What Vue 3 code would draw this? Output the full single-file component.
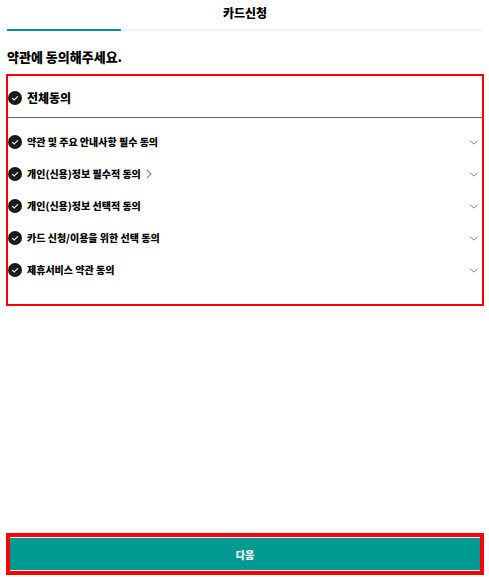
<template>
  <div class="page">
    <header class="top">
      <h1 class="top-title">카드신청</h1>
      <div class="progress">
        <div class="progress-bar" :style="{ width: progress + 'px' }"></div>
      </div>
    </header>

    <h2 class="heading">약관에 동의해주세요.</h2>

    <section class="terms">
      <div class="all-row">
        <svg class="check" viewBox="0 0 14 14">
          <circle cx="7" cy="7" r="7" fill="#1a1a1a" />
          <path d="M4.2 7.1l2 1.9 3.6-3.7" fill="none" stroke="#fff" stroke-width="1.2" />
        </svg>
        <span class="all-label">전체동의</span>
      </div>
      <ul class="term-list">
        <li v-for="term in terms" :key="term.label" class="term-row">
          <svg class="check" viewBox="0 0 14 14">
            <circle cx="7" cy="7" r="7" fill="#1a1a1a" />
            <path d="M4.2 7.1l2 1.9 3.6-3.7" fill="none" stroke="#fff" stroke-width="1.2" />
          </svg>
          <span class="term-label">{{ term.label }}</span>
          <svg v-if="term.link" class="link-arrow" viewBox="0 0 6 10">
            <path d="M1 1l4 4-4 4" fill="none" stroke="#888" stroke-width="1.1" />
          </svg>
          <svg class="chevron" viewBox="0 0 8 5">
            <path d="M.5.7L4 4.2 7.5.7" fill="none" stroke="#777" stroke-width="1" />
          </svg>
        </li>
      </ul>
    </section>

    <div class="next-wrap">
      <button class="next-btn" type="button">다음</button>
    </div>
  </div>
</template>

<script setup>
const progress = 114

const terms = [
  { label: '약관 및 주요 안내사항 필수 동의' },
  { label: '개인(신용)정보 필수적 동의', link: true },
  { label: '개인(신용)정보 선택적 동의' },
  { label: '카드 신청/이용을 위한 선택 동의' },
  { label: '제휴서비스 약관 동의' }
]
</script>

<style>
html,
body {
  margin: 0;
  background: #fff;
}
</style>

<style scoped>
.page {
  height: 577px;
  box-sizing: border-box;
  padding: 0 7px 2px;
  display: flex;
  flex-direction: column;
  font-family: "Noto Sans CJK KR", "Noto Sans", sans-serif;
  color: #000;
  overflow: hidden;
}

.top-title {
  margin: 0;
  height: 29px;
  padding-left: 1px;
  line-height: 26px;
  font-size: 12px;
  font-weight: 900;
  text-align: center;
}

.progress {
  height: 2px;
  background: #f2f2f2;
}

.progress-bar {
  height: 100%;
  background: #00928a;
}

.heading {
  margin: 17px 0 0;
  height: 26px;
  line-height: 18px;
  font-size: 13px;
  font-weight: 900;
}

.terms {
  margin: 0 -2px 0 -1px;
  height: 232px;
  box-sizing: border-box;
  border: 2px solid #f00;
  flex-shrink: 0;
}

.all-row {
  height: 39px;
  padding-top: 2px;
  display: flex;
  align-items: center;
  gap: 5px;
  border-bottom: 1px solid #666;
}

.check {
  width: 14px;
  height: 14px;
  flex-shrink: 0;
}

.all-label {
  font-size: 12px;
  font-weight: 900;
  line-height: 16px;
}

.term-list {
  margin: 8px 0 0;
  padding: 0;
  list-style: none;
}

.term-row {
  height: 32px;
  display: flex;
  align-items: center;
  gap: 5px;
}

.term-label {
  font-size: 10px;
  font-weight: 900;
  line-height: 14px;
}

.link-arrow {
  width: 6px;
  height: 10px;
}

.chevron {
  width: 8px;
  height: 5px;
  margin-left: auto;
  margin-right: 4px;
}

.next-wrap {
  margin: auto -2px 0 -1px;
  border: 4px solid #f00;
}

.next-btn {
  display: block;
  width: 100%;
  height: 34px;
  padding: 0;
  border: 0;
  border-top: 1px solid #e6f3f2;
  border-bottom: 1px solid #e6f3f2;
  background: #009a92;
  color: #fff;
  font-family: inherit;
  font-size: 10px;
  font-weight: 900;
}
</style>
